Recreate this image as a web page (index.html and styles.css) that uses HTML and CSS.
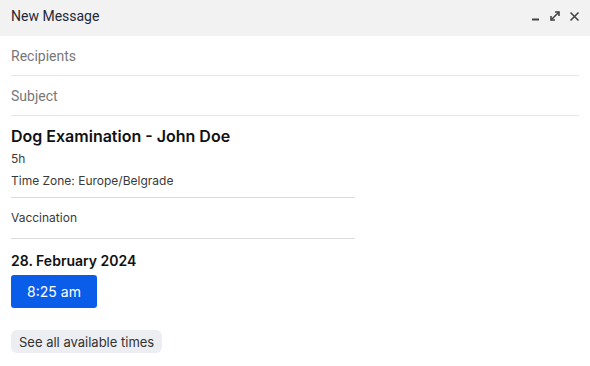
FILE: index.html
```html
<!DOCTYPE html>
<html lang="en">
<head>
    <meta charset="UTF-8">
    <meta name="viewport" content="width=device-width, initial-scale=1.0">
    <title>New Message</title>
    <link rel="stylesheet" href="styles.css">
</head>
<body>

    <div class="composer">
        <!-- Title bar -->
        <div class="composer-header">
            <span class="composer-title">New Message</span>
            <div class="header-actions">
                <svg width="10" height="10" viewBox="0 0 10 10"><rect x="1" y="7.5" width="7" height="2" fill="#444"/></svg>
                <svg width="12" height="12" viewBox="0 0 12 12" fill="none" stroke="#444" stroke-width="1.6">
                    <path d="M2 10 L10 2"/>
                    <path d="M6 2 H10 V6" stroke-linejoin="miter"/>
                    <path d="M2 6 V10 H6"/>
                </svg>
                <svg width="11" height="11" viewBox="0 0 11 11" fill="none" stroke="#444" stroke-width="1.6">
                    <path d="M1.5 1.5 L9.5 9.5 M9.5 1.5 L1.5 9.5"/>
                </svg>
            </div>
        </div>

        <!-- Fields -->
        <div class="composer-body">
            <div class="field">Recipients</div>
            <div class="field">Subject</div>

            <!-- Booking card -->
            <div class="booking">
                <h3 class="booking-title">Dog Examination - John Doe</h3>
                <p class="booking-meta">5h</p>
                <p class="booking-meta">Time Zone: Europe/Belgrade</p>
                <div class="booking-row">Vaccination</div>
                <div class="booking-date">28. February 2024</div>
                <button class="slot-btn">8:25 am</button>
                <button class="all-times">See all available times</button>
            </div>
        </div>
    </div>

</body>
</html>
```

FILE: styles.css
```css
body {
    margin: 0;
    background-color: white;
    font-family: Roboto, Arial, sans-serif;
}
.composer {
    width: 590px;
}
.composer-header {
    height: 36px;
    background-color: #f2f2f2;
    display: flex;
    align-items: center;
    justify-content: space-between;
    padding: 0 10px 4px 11px;
    box-sizing: border-box;
}
.composer-title {
    font-size: 14px;
    color: #1f2937;
}
.header-actions {
    display: flex;
    align-items: center;
    gap: 8px;
}
.composer-body {
    padding: 0 11px;
}
.field {
    height: 40px;
    line-height: 40px;
    border-bottom: 1px solid #e6e6e6;
    font-size: 14px;
    color: #777;
    box-sizing: border-box;
}
.booking {
    width: 344px;
    font-family: Inter, Arial, sans-serif;
    color: #111;
}
.booking-title {
    font-size: 16px;
    font-weight: 600;
    margin: 10px 0 0;
    line-height: 20px;
}
.booking-meta {
    font-size: 12px;
    color: #3a3a3a;
    margin: 5px 0 0;
    line-height: 16px;
}
.booking-meta + .booking-meta {
    margin-top: 6px;
    padding-bottom: 8px;
    border-bottom: 1px solid #ddd;
}
.booking-row {
    font-size: 12px;
    color: #3a3a3a;
    height: 40px;
    line-height: 40px;
    border-bottom: 1px solid #ddd;
}
.booking-date {
    font-size: 14px;
    font-weight: 600;
    margin-top: 13px;
    line-height: 18px;
}
.slot-btn {
    display: block;
    margin-top: 5px;
    width: 86px;
    height: 33px;
    background-color: #0a5de8;
    color: white;
    border: none;
    border-radius: 3px;
    font-family: Inter, Arial, sans-serif;
    font-size: 14px;
    cursor: pointer;
}
.all-times {
    display: block;
    margin-top: 22px;
    padding: 0 8px;
    height: 23px;
    background-color: #eceef2;
    color: #333;
    border: none;
    border-radius: 6px;
    font-family: Inter, Arial, sans-serif;
    font-size: 13px;
    cursor: pointer;
}
```
